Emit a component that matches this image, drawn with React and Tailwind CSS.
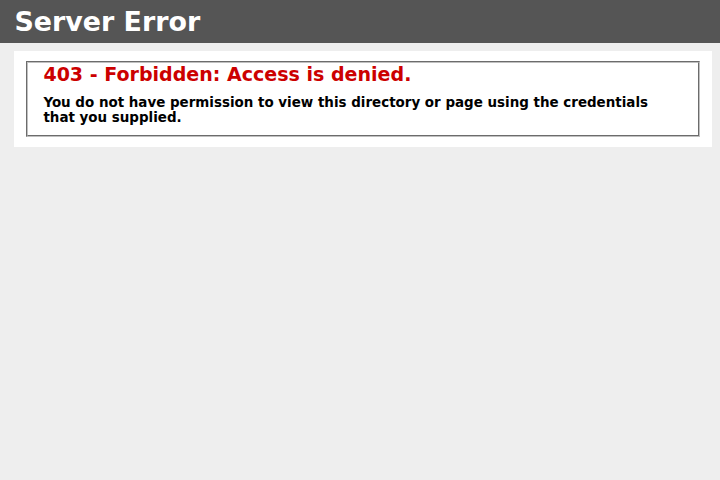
export default function App() {
  return (
    <div className="min-h-[480px] bg-[#eeeeee] text-[11.2px] font-['DejaVu_Sans',Verdana,sans-serif]">
      {/* Header */}
      <div className="bg-[#555555] px-[2%] py-[6px] text-white">
        <h1 className="m-0 text-[26.88px] font-bold leading-[1.164]">Server Error</h1>
      </div>

      {/* Content */}
      <div className="ml-[2%]">
        <div className="mt-[8px] w-[96%] box-content bg-white p-[10px]">
          <fieldset className="mx-[2px] border-2 [border-style:groove] border-[rgb(192,192,192)] px-[15px] pb-[10px] pt-0">
            <h2 className="m-0 text-[19.04px] font-bold leading-[1.164] text-[#cc0000]">
              403 - Forbidden: Access is denied.
            </h2>
            <h3 className="mt-[10px] text-[13.44px] font-bold leading-[15px] text-black">
              You do not have permission to view this directory or page using the credentials that you supplied.
            </h3>
          </fieldset>
        </div>
      </div>
    </div>
  );
}
